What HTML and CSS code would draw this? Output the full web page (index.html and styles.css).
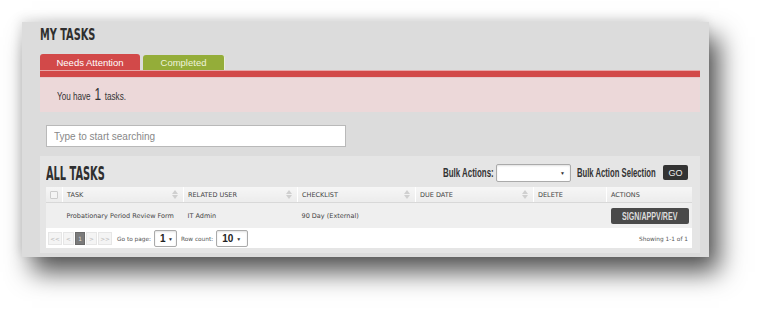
FILE: index.html
```html
<!DOCTYPE html>
<html lang="en">
<head>
  <meta charset="UTF-8" />
  <title>My Tasks</title>
  <link rel="stylesheet" href="styles.css">
</head>
<body>
  <div class="card">
    <h1 class="title"><span class="narrow">MY TASKS</span></h1>

    <div class="tabs">
      <span class="tab tab-red">Needs Attention</span>
      <span class="tab tab-green">Completed</span>
    </div>
    <div class="tab-bar"></div>
    <div class="notice"><span class="narrow">You have <span class="big">1</span> tasks.</span></div>

    <input class="search" type="text" placeholder="Type to start searching" />

    <div class="panel">
      <div class="panel-head">
        <h2 class="subtitle"><span class="narrow">ALL TASKS</span></h2>
        <div class="bulk">
          <span class="bulk-label lbl-actions"><span class="narrow">Bulk Actions:</span></span>
          <span class="fake-select bulk-select"><span class="arrow">&#9660;</span></span>
          <span class="bulk-label lbl-selection"><span class="narrow">Bulk Action Selection</span></span>
          <span class="btn-go">GO</span>
        </div>
      </div>

      <table class="tasks">
        <thead>
          <tr>
            <th class="col-check"><span class="check"></span></th>
            <th class="col-task sortable">TASK</th>
            <th class="col-user sortable">RELATED USER</th>
            <th class="col-list sortable">CHECKLIST</th>
            <th class="col-due sortable">DUE DATE</th>
            <th class="col-del">DELETE</th>
            <th class="col-act">ACTIONS</th>
          </tr>
        </thead>
        <tbody>
          <tr>
            <td></td>
            <td>Probationary Period Review Form</td>
            <td>IT Admin</td>
            <td>90 Day (External)</td>
            <td></td>
            <td></td>
            <td><span class="btn-sign"><span class="narrow">SIGN/APPV/REV</span></span></td>
          </tr>
        </tbody>
      </table>

      <div class="pager">
        <span class="pg wide">&lt;&lt;</span>
        <span class="pg">&lt;</span>
        <span class="pg current">1</span>
        <span class="pg">&gt;</span>
        <span class="pg wide">&gt;&gt;</span>
        <span class="pg-label">Go to page:</span>
        <span class="fake-select page-select">1 <span class="arrow">&#9660;</span></span>
        <span class="pg-label">Row count:</span>
        <span class="fake-select count-select">10 <span class="arrow">&#9660;</span></span>
        <span class="showing">Showing 1-1 of 1</span>
      </div>
    </div>
  </div>
</body>
</html>
```

FILE: styles.css
```css
html, body {
  height: 100%;
}
body {
  margin: 0;
  background: #fff;
  font-family: "Liberation Sans", Arial, sans-serif;
  color: #333;
}
.card {
  margin: 22px 0 0 22px;
  width: 660px;
  height: 235px;
  padding: 0 9px 0 18px;
  background: #dcdcdc;
  box-shadow: 10px 15px 24px rgba(0, 0, 0, 0.68), -2px -3px 10px rgba(0, 0, 0, 0.1);
}
.narrow {
  display: inline-block;
  white-space: nowrap;
  transform-origin: left center;
}
.title, .subtitle {
  font-family: "DejaVu Sans Condensed", "DejaVu Sans", sans-serif;
  font-stretch: condensed;
  font-weight: bold;
  color: #2f2f2f;
  margin: 0;
  white-space: nowrap;
}
.title {
  font-size: 16.5px;
  line-height: 17px;
  padding-top: 4px;
}
.title .narrow {
  transform: scaleX(0.66);
}
.tabs {
  display: flex;
  gap: 3px;
  margin-top: 11px;
  height: 16px;
}
.tab {
  display: flex;
  align-items: center;
  justify-content: center;
  font-size: 9.5px;
  color: #fff;
  border-radius: 3px 3px 0 0;
}
.tab-red {
  width: 100px;
  background: #d24949;
}
.tab-green {
  width: 81px;
  background: #94ad39;
  color: #eef3dc;
  margin-top: 1px;
  border-right: 1px solid #e9eedb;
}
.tab-bar {
  height: 6px;
  background: #d24949;
  border-top: 1px solid #e8a8a8;
  border-bottom: 1px solid #e6c9ca;
}
.notice {
  height: 34px;
  background: #ecd8d9;
  display: flex;
  align-items: center;
  padding-left: 17px;
  font-family: "Liberation Sans", Arial, sans-serif;
  font-size: 11px;
  color: #333;
}
.notice .narrow {
  transform: scaleX(0.74);
}
.notice .big {
  font-size: 16px;
  margin: 0 2px;
}
.search {
  display: block;
  margin: 13px 0 0 6px;
  width: 300px;
  height: 22px;
  box-sizing: border-box;
  border: 1px solid #b9b9b9;
  padding: 0 7px;
  font-family: "Liberation Sans", Arial, sans-serif;
  font-size: 10px;
  background: #fff;
}
.search::placeholder {
  color: #888;
}
.panel {
  margin-top: 9px;
  background: #e5e5e5;
  padding: 0 8px 6px 6px;
  height: 91px;
}
.panel-head {
  display: flex;
  align-items: center;
  justify-content: space-between;
  height: 31px;
}
.subtitle {
  font-size: 19.5px;
  line-height: 20px;
  padding-top: 4px;
}
.subtitle .narrow {
  transform: scaleX(0.56);
}
.bulk {
  display: flex;
  align-items: center;
  font-family: "Liberation Sans", Arial, sans-serif;
  font-weight: bold;
  color: #333;
  padding-top: 2px;
  margin-right: 4px;
}
.bulk-label {
  font-size: 12px;
}
.bulk-label .narrow {
  transform: scaleX(0.66);
}
.lbl-actions {
  width: 51px;
  margin-right: 2px;
}
.lbl-selection {
  width: 78px;
  margin: 0 8px 0 6px;
}
.lbl-selection .narrow {
  transform: scaleX(0.64);
}
.fake-select {
  display: inline-flex;
  align-items: center;
  justify-content: space-between;
  box-sizing: border-box;
  background: #fff;
  border: 1px solid #aaa;
  border-radius: 2px;
  box-shadow: inset 0 1px 2px rgba(0, 0, 0, 0.12);
  font-family: "Liberation Sans", Arial, sans-serif;
  font-weight: bold;
  color: #222;
}
.fake-select .arrow {
  font-size: 5px;
  color: #333;
}
.bulk-select {
  width: 75px;
  height: 18px;
  justify-content: flex-end;
  padding-right: 5px;
}
.btn-go {
  background: #333;
  color: #eee;
  font-size: 9px;
  font-weight: normal;
  width: 25px;
  height: 15px;
  display: flex;
  align-items: center;
  justify-content: center;
  border-radius: 2px;
}
.tasks {
  width: 100%;
  table-layout: fixed;
  border-collapse: collapse;
  font-family: "DejaVu Sans", Verdana, sans-serif;
  font-size: 6.5px;
  color: #444;
}
.tasks th {
  height: 15px;
  background: linear-gradient(#f6f6f6, #ececec);
  text-align: left;
  font-weight: normal;
  padding: 0 0 0 4px;
  border-left: 1px solid #fff;
  border-bottom: 1px solid #d8d8d8;
  position: relative;
}
.tasks th:first-child {
  border-left: none;
}
.tasks th.sortable::before,
.tasks th.sortable::after {
  content: "";
  position: absolute;
  right: 5px;
  border-left: 3px solid transparent;
  border-right: 3px solid transparent;
}
.tasks th.sortable::before {
  top: 3px;
  border-bottom: 4px solid #cfcfcf;
}
.tasks th.sortable::after {
  top: 8px;
  border-top: 4px solid #cfcfcf;
}
.col-check { width: 12px; }
.col-task { width: 116px; }
.col-user { width: 109px; }
.col-list { width: 113px; }
.col-due { width: 113px; }
.col-del { width: 68px; }
.check {
  display: block;
  width: 6px;
  height: 6px;
  border: 1px solid #ccc;
  border-radius: 1px;
  background: #f4f4f4;
}
.tasks td {
  height: 25px;
  background: #efefef;
  padding: 0 0 0 4px;
  border-bottom: 1px solid #fff;
}
.btn-sign {
  display: flex;
  align-items: center;
  width: 78px;
  height: 16px;
  box-sizing: border-box;
  padding-left: 11px;
  background: #4a4a4a;
  color: #ddd;
  border-radius: 2px;
  font-family: "Liberation Sans", Arial, sans-serif;
  font-size: 10.5px;
  font-weight: bold;
}
.btn-sign .narrow {
  transform: scaleX(0.68);
}
.pager {
  display: flex;
  align-items: center;
  height: 19px;
  background: #fff;
  padding: 0 4px 0 2px;
  font-family: "DejaVu Sans", Verdana, sans-serif;
  font-size: 5.8px;
  color: #555;
}
.pg {
  height: 13px;
  width: 11px;
  box-sizing: border-box;
  display: flex;
  align-items: center;
  justify-content: center;
  background: #f4f4f4;
  border: 1px solid #e6e6e6;
  color: #bbb;
  margin-right: 1px;
}
.pg.wide {
  width: 14px;
}
.pg.current {
  width: 10px;
  background: #7a7a7a;
  border-color: #6a6a6a;
  color: #ddd;
}
.pg-label {
  margin: 0 3px 0 4px;
}
.page-select {
  width: 23px;
  height: 17px;
  font-size: 10px;
  padding: 0 3px 0 5px;
}
.count-select {
  width: 32px;
  height: 17px;
  font-size: 10px;
  padding: 0 6px 0 5px;
}
.showing {
  margin-left: auto;
}
```
